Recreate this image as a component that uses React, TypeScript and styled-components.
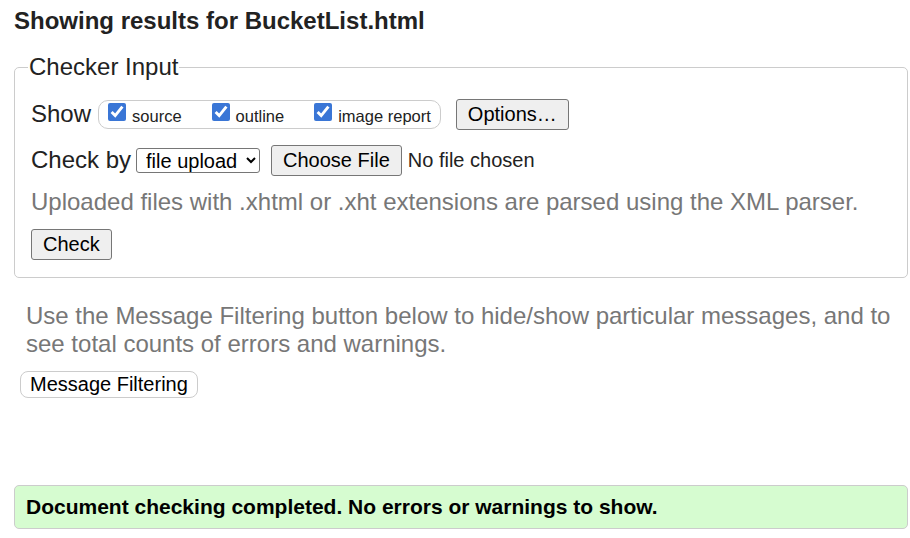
import styled, { createGlobalStyle } from "styled-components";

const GlobalStyle = createGlobalStyle`
  html, body {
    margin: 0;
    padding: 0;
    background: #fff;
  }
  body {
    font-family: "Liberation Sans", Arial, sans-serif;
    color: #222;
  }
`;

export default function App() {
  return (
    <>
      <GlobalStyle />
      <Page>
        <Title>Showing results for BucketList.html</Title>
        <Fieldset>
          <Legend>Checker Input</Legend>
          <Row>
            <RowLabel>Show</RowLabel>
            <CheckGroup>
              <CheckLabel>
                <Checkbox type="checkbox" defaultChecked />
                source
              </CheckLabel>
              <CheckLabel>
                <Checkbox type="checkbox" defaultChecked />
                outline
              </CheckLabel>
              <CheckLabel>
                <Checkbox type="checkbox" defaultChecked />
                image report
              </CheckLabel>
            </CheckGroup>
            <Button>Options…</Button>
          </Row>
          <Row>
            <RowLabel $gap={5}>Check by</RowLabel>
            <Select defaultValue="file">
              <option value="file">file upload</option>
            </Select>
            <Button>Choose File</Button>
            <FileName>No file chosen</FileName>
          </Row>
          <Hint>Uploaded files with .xhtml or .xht extensions are parsed using the XML parser.</Hint>
          <Button>Check</Button>
        </Fieldset>
        <Note>
          Use the Message Filtering button below to hide/show particular messages, and to see
          total counts of errors and warnings.
        </Note>
        <FilterButton>Message Filtering</FilterButton>
        <Success>Document checking completed. No errors or warnings to show.</Success>
      </Page>
    </>
  );
}

const Page = styled.div`
  padding: 7px 2px 0 14px;
  display: flex;
  flex-direction: column;
  align-items: flex-start;
`;

const Title = styled.h2`
  margin: 0;
  font-size: 24px;
  font-weight: 700;
  color: #222;
  line-height: 28px;
`;

const Fieldset = styled.fieldset`
  align-self: stretch;
  margin: 18px 0 0;
  padding: 10px 16px 17px;
  border: 1px solid #ccc;
  border-radius: 5px;
  display: flex;
  flex-direction: column;
  align-items: flex-start;
`;

const Legend = styled.legend`
  padding: 0 1px;
  margin-left: -3px;
  font-size: 24px;
  line-height: 28px;
  color: #222;
`;

const Row = styled.div`
  display: flex;
  align-items: center;
  height: 46px;
  font-size: 24px;
`;

const RowLabel = styled.span<{ $gap?: number }>`
  font-size: 24px;
  color: #222;
  margin-right: ${(p) => p.$gap ?? 7}px;
`;

const CheckGroup = styled.span`
  display: inline-flex;
  align-items: center;
  height: 27px;
  padding: 0 9px 0 9px;
  margin-right: 15px;
  border: 1px solid #ccc;
  border-radius: 10px;
  gap: 10px;
`;

const CheckLabel = styled.label`
  display: inline-flex;
  align-items: center;
  padding-top: 4px;
  font-size: 16.5px;
  color: #222;
  margin-right: 20px;

  &:last-child {
    margin-right: 0;
  }
`;

const Checkbox = styled.input`
  width: 18px;
  height: 18px;
  margin: 0 6px 8px 0;
  accent-color: #3a76d6;
`;

const Button = styled.button`
  font-family: "Liberation Sans", Arial, sans-serif;
  font-size: 20px;
  color: #000;
  background: #efefef;
  border: 1px solid #767676;
  border-radius: 3px;
  padding: 2px 11px;
  height: 31px;
  cursor: pointer;
`;

const Select = styled.select`
  font-family: "Liberation Sans", Arial, sans-serif;
  font-size: 20px;
  color: #000;
  background: #fff;
  border: 1px solid #767676;
  border-radius: 3px;
  height: 25px;
  padding: 0 5px 0 5px;
  margin-right: 11px;
`;

const FileName = styled.span`
  font-size: 20px;
  color: #222;
  margin-left: 6px;
`;

const Hint = styled.p`
  margin: 5px 0 13px;
  font-size: 24px;
  line-height: 28px;
  color: #777;
`;

const Note = styled.p`
  margin: 24px 0 13px 12px;
  font-size: 24px;
  line-height: 28px;
  color: #777;
`;

const FilterButton = styled.button`
  font-family: "Liberation Sans", Arial, sans-serif;
  font-size: 20px;
  color: #000;
  background: #fff;
  border: 1px solid #ccc;
  border-radius: 8px;
  padding: 0 9px;
  height: 27px;
  margin-left: 6px;
`;

const Success = styled.div`
  align-self: stretch;
  margin-top: 87px;
  padding: 10px 11px;
  background: #d6fcd0;
  border: 1px solid #ccc;
  border-radius: 5px;
  font-size: 21px;
  font-weight: 700;
  line-height: 22px;
  color: #000;
`;
